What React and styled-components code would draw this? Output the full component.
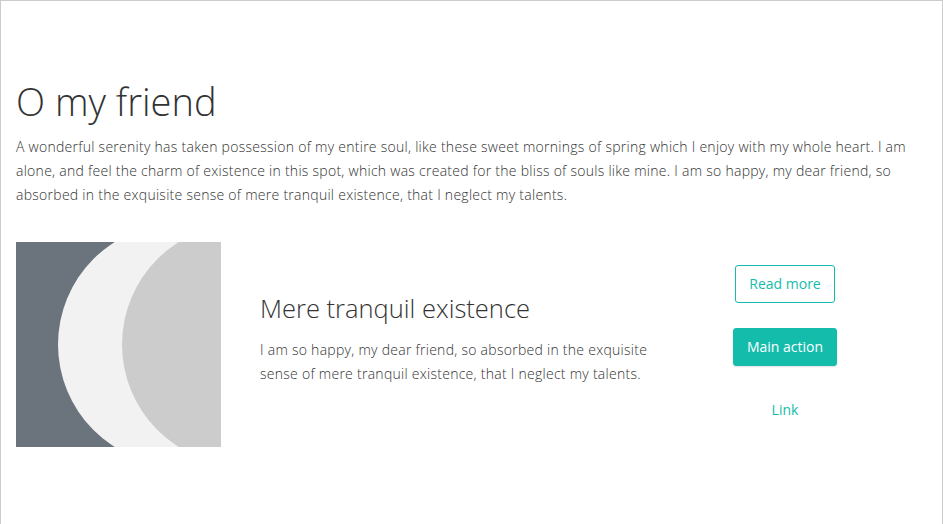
import React from "react";
import styled, { createGlobalStyle } from "styled-components";

const GlobalStyle = createGlobalStyle`
  html, body {
    margin: 0;
    padding: 0;
    background: #ffffff;
  }

  body {
    font-family: "Open Sans", "Noto Sans", sans-serif;
    font-weight: 300;
    color: #333333;
  }
`;

export default function App() {
  return (
    <>
      <GlobalStyle />
      <Frame>
        <Title>O my friend</Title>
        <Lead>
          A wonderful serenity has taken possession of my entire soul, like these sweet mornings of spring which I enjoy
          with my whole heart. I am alone, and feel the charm of existence in this spot, which was created for the bliss
          of souls like mine. I am so happy, my dear friend, so absorbed in the exquisite sense of mere tranquil
          existence, that I neglect my talents.
        </Lead>

        <Card>
          <Picture>
            <svg width="205" height="205" viewBox="0 0 205 205">
              <rect width="205" height="205" fill="#6b737c" />
              <circle cx="163" cy="102.5" r="121" fill="#f2f2f2" />
              <circle cx="227" cy="102.5" r="121" fill="#cccccc" />
            </svg>
          </Picture>

          <CardBody>
            <CardTitle>Mere tranquil existence</CardTitle>
            <CardText>
              I am so happy, my dear friend, so absorbed in the exquisite sense of mere tranquil existence, that I
              neglect my talents.
            </CardText>
          </CardBody>

          <Actions>
            <Button $variant="outline">Read more</Button>
            <Button $variant="primary">Main action</Button>
            <LinkButton href="#">Link</LinkButton>
          </Actions>
        </Card>
      </Frame>
    </>
  );
}

const Frame = styled.div`
  box-sizing: border-box;
  width: 943px;
  min-height: 524px;

  border: 1px solid #cccccc;
  border-bottom: none;

  padding: 77px 15px 0 15px;
`;

const Title = styled.h1`
  margin: 0;

  font-size: 38px;
  font-weight: 300;
  line-height: 46px;
  color: #333333;
`;

const Lead = styled.p`
  margin: 11px 0 0 0;

  font-size: 14px;
  line-height: 24px;
  letter-spacing: 0.27px;
  color: #333333;
`;

const Card = styled.div`
  display: flex;
  align-items: center;

  margin-top: 35px;
`;

const Picture = styled.div`
  width: 205px;
  height: 205px;
  flex-shrink: 0;

  & svg {
    display: block;
  }
`;

const CardBody = styled.div`
  width: 420px;
  margin-left: 39px;
  margin-bottom: 12px;
`;

const CardTitle = styled.h2`
  margin: 0;

  font-size: 25.5px;
  font-weight: 300;
  line-height: 32px;
  color: #333333;
`;

const CardText = styled.p`
  margin: 14px 0 0 0;

  font-size: 14px;
  line-height: 24px;
  letter-spacing: 0.27px;
  color: #333333;
`;

const Actions = styled.div`
  width: 200px;
  margin-left: 5px;
  margin-top: 4px;

  display: flex;
  flex-direction: column;
  align-items: center;
  gap: 25px;
`;

const Button = styled.button`
  box-sizing: border-box;
  height: 38px;
  padding: 0 13px;

  font-family: inherit;
  font-size: 14px;
  font-weight: 400;

  border-radius: 3px;
  border: 1px solid #14bcac;
  cursor: pointer;

  color: ${(p) => (p.$variant === "primary" ? "#ffffff" : "#14bcac")};
  background: ${(p) => (p.$variant === "primary" ? "#14bcac" : "#ffffff")};
  box-shadow: ${(p) => (p.$variant === "primary" ? "0 1px 2px rgba(0, 0, 0, 0.12)" : "none")};
`;

const LinkButton = styled.a`
  display: flex;
  align-items: center;
  height: 38px;

  font-size: 14px;
  font-weight: 400;
  color: #14bcac;
  text-decoration: none;
`;
